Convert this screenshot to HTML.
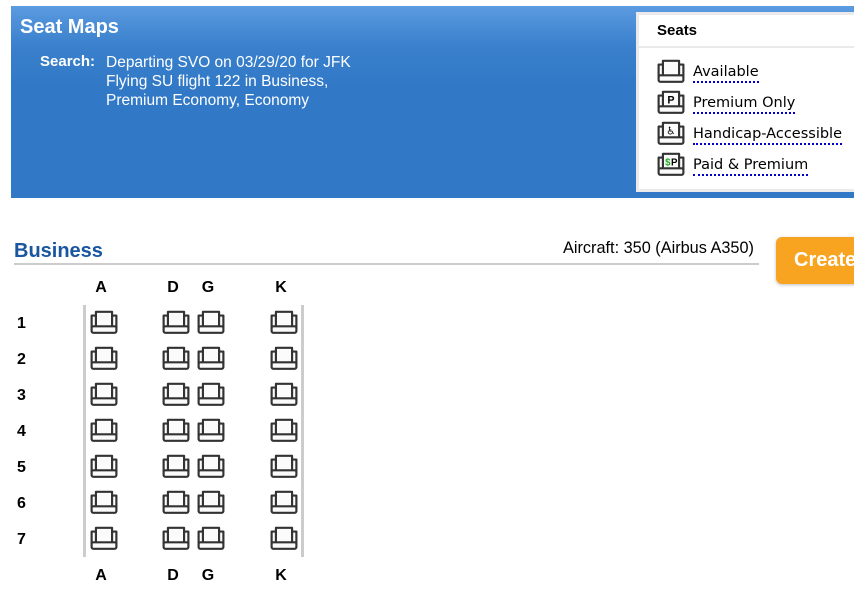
<!DOCTYPE html>
<html><head><style>
body{margin:0;width:854px;height:597px;background:#fff;font-family:"Liberation Sans",Arial,sans-serif;position:relative;overflow:hidden}
.a{position:absolute}
.hdr{left:11px;top:6px;width:843px;height:192px;background:linear-gradient(#5b9be0 0px,#3a80cc 40px,#3179c7 80px,#3179c7)}
.leg{left:636px;top:12px;width:218px;height:180px;background:#fff;border:3px solid #eaeaea;border-right:none;box-sizing:border-box}
.lk{font-family:"DejaVu Sans",sans-serif;font-size:14.5px;color:#000;border-bottom:2px dotted #00c;line-height:18px}
.b{font-weight:bold}
svg.s{position:absolute;width:28px;height:24px}
.vl{width:3px;background:#ccc;top:305px;height:252px}
.cl{font-weight:bold;font-size:16px}
</style></head><body>
<div class="a hdr"></div>
<div class="a b" style="left:20px;top:16px;font-size:20px;color:#fff">Seat Maps</div>
<div class="a b" style="left:40px;top:53px;font-size:15px;color:#fff">Search:</div>
<div class="a" style="left:106px;top:53px;font-size:15.5px;color:#fff;line-height:19px">Departing SVO on 03/29/20 for JFK<br>Flying SU flight 122 in Business,<br>Premium Economy, Economy</div>
<div class="a leg"></div>
<div class="a" style="left:639px;top:46px;width:215px;height:2px;background:#eaeaea"></div>
<div class="a b" style="left:657px;top:22px;font-size:15px">Seats</div>
<svg width="0" height="0" style="position:absolute"><defs><g id="seat" fill="#fbfbfb" stroke="#333" stroke-width="2" stroke-linejoin="round"><path d="M5.5 1.5h15v14h-15z"/><path d="M1.5 5h4v11h-4zM20.5 5h4v11h-4z"/><rect x="1.5" y="15" width="23" height="6" rx="1.5"/></g></defs></svg>
<svg class="s" style="left:657px;top:59px" viewBox="0 0 26 22"><use href="#seat"/></svg>
<svg class="s" style="left:657px;top:90px" viewBox="0 0 26 22"><use href="#seat"/><text x="13" y="12.5" font-size="10" text-anchor="middle" font-family="Liberation Sans" font-weight="bold">P</text></svg>
<svg class="s" style="left:657px;top:121px" viewBox="0 0 26 22"><use href="#seat"/><text x="13" y="12.5" font-size="10" text-anchor="middle" font-family="DejaVu Sans" font-weight="bold">♿</text></svg>
<svg class="s" style="left:657px;top:152px" viewBox="0 0 26 22"><use href="#seat"/><text x="10" y="12.5" font-size="9" text-anchor="middle" fill="#2a2" font-family="Liberation Sans" font-weight="bold">$</text><text x="16" y="12.5" font-size="9" text-anchor="middle" font-family="Liberation Sans" font-weight="bold">P</text></svg>
<div class="a lk" style="left:693px;top:63px">Available</div>
<div class="a lk" style="left:693px;top:94px">Premium Only</div>
<div class="a lk" style="left:693px;top:125px">Handicap-Accessible</div>
<div class="a lk" style="left:693px;top:156px">Paid &amp; Premium</div>
<div class="a b" style="left:14px;top:240px;font-size:20px;color:#1a56a0">Business</div>
<div class="a" style="left:563px;top:239px;font-size:16.3px">Aircraft: 350 (Airbus A350)</div>
<div class="a" style="left:14px;top:263px;width:745px;height:2px;background:#ccc"></div>
<div class="a b" style="left:776px;top:237px;width:100px;height:47px;background:#f9a421;border-radius:6px;color:#fff;font-size:20px;line-height:47px;padding-left:18px;box-sizing:border-box;box-shadow:0 1px 3px rgba(0,0,0,.25)">Create</div>
<div class="a vl" style="left:83px"></div>
<div class="a vl" style="left:301px"></div>
<div id="g"></div>
<script>
var h='',cols=[[90,'A'],[162,'D'],[197,'G'],[270,'K']];
cols.forEach(function(c){h+='<div class="a cl" style="left:'+(c[0]+1)+'px;top:279px;width:20px;text-align:center">'+c[1]+'</div><div class="a cl" style="left:'+(c[0]+1)+'px;top:567px;width:20px;text-align:center">'+c[1]+'</div>';});
for(var r=0;r<7;r++){var y=310+r*36;h+='<div class="a cl" style="left:17px;top:'+(y+5)+'px">'+(r+1)+'</div>';
cols.forEach(function(c){h+='<svg class="s" style="left:'+c[0]+'px;top:'+y+'px" viewBox="0 0 26 22"><use href="#seat"/></svg>';});}
document.getElementById('g').innerHTML=h;
</script>
</body></html>
